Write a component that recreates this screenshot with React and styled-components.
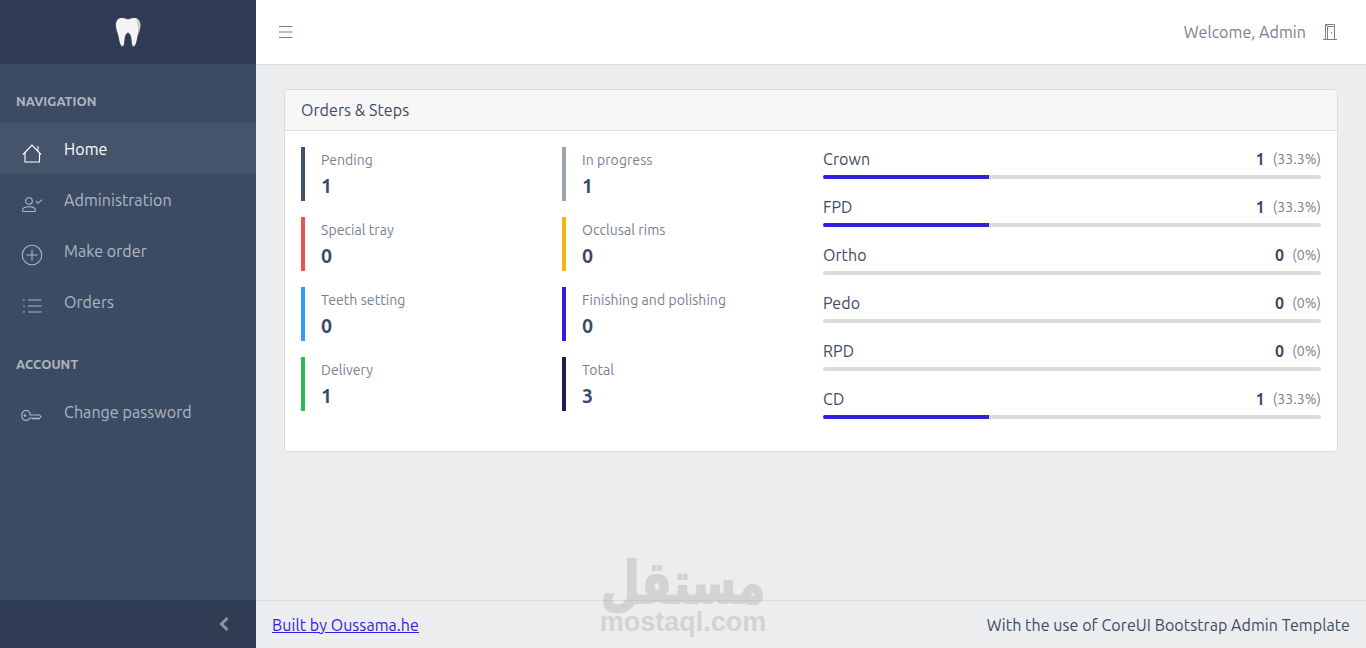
import React from 'react'
import styled, { createGlobalStyle } from 'styled-components'

const Global = createGlobalStyle`
  html, body { margin: 0; padding: 0; height: 100%; }
  body {
    font-family: "Ubuntu", "Lato", "Noto Sans", "Liberation Sans", sans-serif;
    font-size: 14px;
    letter-spacing: .07px;
    color: #3c4b64;
    background: #ebedef;
  }
  * { box-sizing: border-box; }
`

const Page = styled.div`
  display: flex;
  height: 648px;
  overflow: hidden;
  position: relative;
`

const Sidebar = styled.aside`
  width: 256px;
  flex: none;
  display: flex;
  flex-direction: column;
  background: #3c4b64;
`

const Brand = styled.div`
  height: 64px;
  flex: none;
  background: #303c54;
  display: flex;
  align-items: center;
  justify-content: center;
  padding-bottom: 1px;
`

const Nav = styled.nav`
  flex: 1;
  padding-top: 18px;
`

const NavTitle = styled.div`
  height: 38px;
  padding: 0 16px;
  display: flex;
  align-items: center;
  font-size: 13px;
  font-weight: 700;
  color: rgba(255, 255, 255, .6);
  text-transform: uppercase;
  margin-top: ${p => p.$top || 0}px;
  margin-bottom: 3px;
`

const NavItem = styled.a`
  height: 51px;
  display: flex;
  align-items: center;
  font-size: 16px;
  color: ${p => (p.$active ? '#fff' : 'rgba(255, 255, 255, .6)')};
  background: ${p => (p.$active ? 'rgba(255, 255, 255, .05)' : 'transparent')};
  svg {
    width: 22px;
    height: 22px;
    margin: 9px 21px 0 21px;
    flex: none;
    stroke: currentColor;
    fill: none;
    stroke-width: 1.1;
  }
`

const Toggler = styled.div`
  height: 48px;
  flex: none;
  background: #303c54;
  display: flex;
  align-items: center;
  justify-content: flex-end;
  padding-right: 26px;
  color: rgba(255, 255, 255, .45);
`

const Wrapper = styled.div`
  flex: 1;
  display: flex;
  flex-direction: column;
  min-width: 0;
`

const Header = styled.header`
  height: 65px;
  flex: none;
  background: #fff;
  border-bottom: 1px solid #d8dbe0;
  display: flex;
  align-items: center;
  justify-content: space-between;
  padding: 0 28px 0 22px;
  color: #768192;
`

const Welcome = styled.div`
  display: flex;
  align-items: center;
  gap: 16px;
  font-size: 16px;
`

const Main = styled.main`
  flex: 1;
  padding: 24px 28px;
`

const Card = styled.section`
  background: #fff;
  border: 1px solid #d8dbe0;
  border-radius: 4px;
  overflow: hidden;
`

const CardHeader = styled.div`
  height: 41px;
  padding: 0 16px;
  display: flex;
  align-items: center;
  font-size: 16px;
  color: #3c4b64;
  background: #f7f7f7;
  border-bottom: 1px solid #d8dbe0;
`

const CardBody = styled.div`
  display: grid;
  grid-template-columns: 261px 261px 1fr;
  padding: 16px;
`

const Callouts = styled.div`
  grid-column: span 2;
  display: grid;
  grid-template-columns: 261px 261px;
  grid-auto-rows: 54px;
  row-gap: 16px;
`

const Callout = styled.div`
  border-left: 4px solid ${p => p.$color};
  padding-left: 16px;
  display: flex;
  flex-direction: column;
`

const CalloutLabel = styled.small`
  font-size: 14px;
  line-height: 21px;
  margin-top: 3px;
  color: #768192;
`

const CalloutValue = styled.strong`
  font-size: 19.6px;
  line-height: 29px;
  margin-top: 1px;
  font-weight: 700;
  color: #3c4b64;
`

const Progress = styled.div`
  height: 48px;
`

const ProgressHead = styled.div`
  display: flex;
  align-items: center;
  height: 24px;
  font-size: 16px;
  color: #3c4b64;
`

const ProgressCount = styled.span`
  margin-left: auto;
  font-size: 16px;
  font-weight: 700;
`

const ProgressPercent = styled.span`
  margin-left: 8px;
  font-size: 14px;
  color: #768192;
`

const Track = styled.div`
  height: 4px;
  margin-top: 4px;
  background: #d8dbe0;
  border-radius: 4px;
  overflow: hidden;
`

const Fill = styled.div`
  height: 100%;
  background: #321fdb;
`

const Footer = styled.footer`
  height: 48px;
  flex: none;
  border-top: 1px solid #d8dbe0;
  display: flex;
  align-items: center;
  justify-content: space-between;
  padding: 0 16px;
  font-size: 16px;
  color: #3c4b64;
  a { color: #321fdb; text-decoration: underline; }
`

const Watermark = styled.div`
  position: absolute;
  left: 600px;
  top: 563px;
  width: 166px;
  display: flex;
  flex-direction: column;
  align-items: center;
  color: #9a9a9a;
  opacity: .3;
  font-weight: 700;
  letter-spacing: 0;
  pointer-events: none;
`

const WatermarkArabic = styled.span`
  font-family: "DejaVu Sans", sans-serif;
  font-size: 45px;
  line-height: 40px;
  height: 40px;
  transform: scaleY(1.3);
  -webkit-text-stroke: 1.5px #9a9a9a;
`

const WatermarkLatin = styled.span`
  font-family: "Liberation Sans", sans-serif;
  font-size: 27px;
  line-height: 24px;
  margin-top: 7px;
`

const Tooth = () => (
  <svg width="28" height="32" viewBox="0 0 28 32">
    <path
      d="M8 1.500C4 1.500 1.500 4.500 1.500 9c0 4 1.500 7 2.500 11 .8 3.500 1.500 9.500 4 10.500 2.500 1 2.500-4 3-8 .4-2.500 1.500-5.500 3-5.500s2.600 3 3 5.500c.5 4 .5 9 3 8 2.500-1 3.200-7 4-10.500 1-4 2.500-7 2.500-11 0-4.500-2.500-7.500-6.500-7.500-2.500 0-4.500 1.500-6 1.500S10.500 1.500 8 1.500z"
      fill="#f4f4f4"
      stroke="#2b2360"
      strokeWidth=".7"
    />
    <path d="M22 2.500c3 1 4.500 3.500 4.500 6.500 0 3-1 5.500-2 9-.5-5-.5-11-2.500-15.500z" fill="#c9c9c9" />
  </svg>
)

const HomeIcon = () => (
  <svg viewBox="0 0 22 22">
    <path d="M2 12.500 11 3l9 9.500M4 10.500V20h14.500v-9.500M17 4v5" />
  </svg>
)

const UserIcon = () => (
  <svg viewBox="0 0 22 22">
    <circle cx="8" cy="8" r="3.300" />
    <path d="M1.500 17.500c0-2 2.500-3.700 6.500-3.700s6.500 1.700 6.500 3.700c0 .6-.4 1-1 1h-11c-.6 0-1-.4-1-1zM15 8l2 2.300 4-3.600" />
  </svg>
)

const PlusIcon = () => (
  <svg viewBox="0 0 22 22">
    <circle cx="11" cy="11" r="9.800" />
    <path d="M11 5.500v11M5.500 11h11" />
  </svg>
)

const ListIcon = () => (
  <svg viewBox="0 0 22 22">
    <path d="M7 5h13.500M7 11h13.500M7 17h13.500M2 5h1.800M2 11h1.800M2 17h1.800" />
  </svg>
)

const KeyIcon = () => (
  <svg viewBox="0 0 22 22">
    <path d="M9 8c-1-1.800-2.500-2.600-4-2.600-2.400 0-4.300 2-4.300 5s1.900 5 4.300 5c1.500 0 3-.8 4-2.400h2l1 1 1-1 1 1 1-1 1 1 1-1 1 1 2-2.400-1.500-1.600H9z" />
    <circle cx="4" cy="10.500" r=".8" />
  </svg>
)

const MenuIcon = () => (
  <svg width="16" height="14" viewBox="0 0 16 14" fill="none" stroke="#768192" strokeWidth="1.200">
    <path d="M1 1.500h13.500M1 7h13.500M1 12.500h13.500" />
  </svg>
)

const DoorIcon = () => (
  <svg width="16" height="18" viewBox="0 0 16 18" fill="none" stroke="#768192" strokeWidth="1">
    <path d="M1 16.500h14M3.500 16.500V1.500h9v15M3.500 1.500l2 2v13M5.500 3.500h7" />
    <path d="M9.500 9v1.500" />
  </svg>
)

const Chevron = () => (
  <svg width="12" height="16" viewBox="0 0 12 16" fill="none" stroke="currentColor" strokeWidth="3">
    <path d="M9.500 2 3.500 8l6 6" />
  </svg>
)

const steps = [
  ['Pending', 1, '#44536d'],
  ['In progress', 1, '#9ba6b2'],
  ['Special tray', 0, '#e55353'],
  ['Occlusal rims', 0, '#f9b115'],
  ['Teeth setting', 0, '#3399ff'],
  ['Finishing and polishing', 0, '#321fdb'],
  ['Delivery', 1, '#2eb85c'],
  ['Total', 3, '#2a1555'],
]

const kinds = [
  ['Crown', 1, '33.3%'],
  ['FPD', 1, '33.3%'],
  ['Ortho', 0, '0%'],
  ['Pedo', 0, '0%'],
  ['RPD', 0, '0%'],
  ['CD', 1, '33.3%'],
]

export default function App() {
  return (
    <>
      <Global />
      <Page>
        <Sidebar>
          <Brand><Tooth /></Brand>
          <Nav>
            <NavTitle>Navigation</NavTitle>
            <NavItem $active><HomeIcon />Home</NavItem>
            <NavItem><UserIcon />Administration</NavItem>
            <NavItem><PlusIcon />Make order</NavItem>
            <NavItem><ListIcon />Orders</NavItem>
            <NavTitle $top={18}>Account</NavTitle>
            <NavItem><KeyIcon />Change password</NavItem>
          </Nav>
          <Toggler><Chevron /></Toggler>
        </Sidebar>
        <Wrapper>
          <Header>
            <MenuIcon />
            <Welcome>Welcome, Admin <DoorIcon /></Welcome>
          </Header>
          <Main>
            <Card>
              <CardHeader>Orders &amp; Steps</CardHeader>
              <CardBody>
                <Callouts>
                  {steps.map(([label, value, color]) => (
                    <Callout key={label} $color={color}>
                      <CalloutLabel>{label}</CalloutLabel>
                      <CalloutValue>{value}</CalloutValue>
                    </Callout>
                  ))}
                </Callouts>
                <div>
                  {kinds.map(([label, count, percent]) => (
                    <Progress key={label}>
                      <ProgressHead>
                        {label}
                        <ProgressCount>{count}</ProgressCount>
                        <ProgressPercent>({percent})</ProgressPercent>
                      </ProgressHead>
                      <Track><Fill style={{ width: percent }} /></Track>
                    </Progress>
                  ))}
                </div>
              </CardBody>
            </Card>
          </Main>
          <Footer>
            <a href="#built">Built by Oussama.he</a>
            <span>With the use of CoreUI Bootstrap Admin Template</span>
          </Footer>
        </Wrapper>
        <Watermark>
          <WatermarkArabic>مستقل</WatermarkArabic>
          <WatermarkLatin>mostaql.com</WatermarkLatin>
        </Watermark>
      </Page>
    </>
  )
}
